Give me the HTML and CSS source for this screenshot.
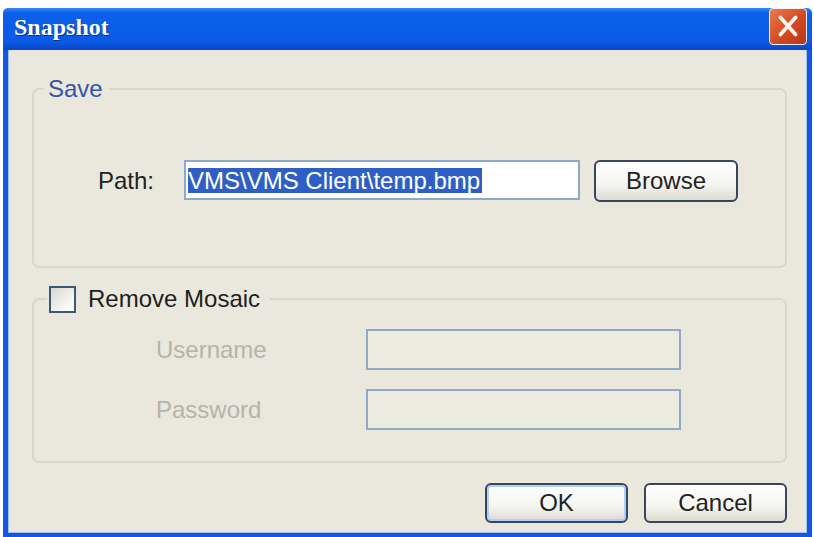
FILE: index.html
```html
<!DOCTYPE html>
<html lang="en">
  <head>
    <meta charset="UTF-8" />
    <title>Snapshot</title>
    <link rel="stylesheet" href="styles.css">
  </head>
  <body>
    <div class="window">
      <header class="titlebar">
        <span class="title">Snapshot</span>
        <button class="close" aria-label="Close">
          <svg width="38" height="37" viewBox="0 0 38 37">
            <path d="M11 9 L27 27 M27 9 L11 27" stroke="#fff4ea" stroke-width="4" stroke-linecap="round" fill="none" />
          </svg>
        </button>
      </header>
      <main class="client">
        <fieldset class="group save">
          <legend>Save</legend>
          <div class="path-row">
            <label class="label">Path:</label>
            <div class="field"><span class="sel">VMS\VMS Client\temp.bmp</span></div>
            <button class="btn browse">Browse</button>
          </div>
        </fieldset>

        <fieldset class="group mosaic">
          <legend><span class="check"></span>Remove Mosaic</legend>
          <div class="cred">
            <span class="dim">Username</span>
            <div class="field off"></div>
            <span class="dim">Password</span>
            <div class="field off"></div>
          </div>
        </fieldset>

        <div class="actions">
          <button class="btn default">OK</button>
          <button class="btn">Cancel</button>
        </div>
      </main>
    </div>
  </body>
</html>
```

FILE: styles.css
```css
body {
  margin: 0;
  background: #ffffff;
  font-family: "Liberation Sans", Arial, sans-serif;
}

.window {
  margin: 8px 2px 0 3px;
  height: 529px;
  display: flex;
  flex-direction: column;
}

.titlebar {
  height: 42px;
  flex: none;
  display: flex;
  align-items: flex-start;
  justify-content: space-between;
  background: linear-gradient(#3a86f6 0%, #0b60ea 12%, #0a5ae6 80%, #0846c4 100%);
  border-radius: 5px 5px 0 0;
}
.title {
  margin: 6px 0 0 11px;
  font-family: "Liberation Serif", "Times New Roman", serif;
  font-weight: bold;
  font-size: 24px;
  color: #ffffff;
  text-shadow: 1px 1px 0 #0b2f8a;
}
.close {
  width: 38px;
  height: 37px;
  margin-right: 5px;
  padding: 0;
  border: 1px solid #f2f2f2;
  border-radius: 4px;
  background: linear-gradient(135deg, #ea7a52, #d24a22 55%, #b8341a);
  display: flex;
  align-items: center;
  justify-content: center;
}

.client {
  flex: 1;
  background: #eae8dc;
  border: 5px solid #1457dc;
  border-top: 0;
  border-bottom-width: 4px;
  box-shadow: inset 1px 0 #9cc0f4, inset -1px 0 #9cc0f4, inset 0 -1px #9cc0f4;
  display: flex;
  flex-direction: column;
}

.group {
  margin: 0 20px 0 24px;
  padding: 0;
  border: 2px solid #d9d7c8;
  border-radius: 7px;
  box-sizing: border-box;
}
.group legend {
  margin-left: 10px;
  padding: 0 6px 0 4px;
  font-size: 24px;
  line-height: 28px;
}

.save {
  margin-top: 25px;
  height: 193px;
}
.save legend {
  color: #3354a8;
}
.path-row {
  display: flex;
  align-items: flex-start;
  margin-top: 57px;
  padding-left: 64px;
}
.label {
  width: 86px;
  margin-top: 7px;
  font-size: 24px;
  color: #222222;
}

.field {
  box-sizing: border-box;
  width: 396px;
  height: 40px;
  border: 2px solid #8da8c8;
  background: #ffffff;
  padding: 6px 0 0 2px;
}
.sel {
  display: inline-block;
  height: 25px;
  line-height: 25px;
  padding-right: 2px;
  background: #2f5fc4;
  color: #ffffff;
  font-size: 24px;
}

.btn {
  box-sizing: border-box;
  width: 143px;
  height: 40px;
  padding: 0;
  border: 2px solid #39445e;
  border-radius: 6px;
  background: linear-gradient(#ffffff, #f4f4f0 60%, #dedbd0);
  font-family: "Liberation Sans", Arial, sans-serif;
  font-size: 24px;
  color: #222222;
}
.browse {
  width: 144px;
  height: 42px;
  margin-left: 14px;
}
.default {
  box-shadow: inset 0 0 0 2px #b4cdf6;
}

.mosaic {
  margin-top: 17px;
  height: 178px;
}
.mosaic legend {
  display: flex;
  align-items: center;
  margin-left: 13px;
  padding: 0 10px 0 2px;
  color: #1e1e1e;
}
.check {
  box-sizing: border-box;
  width: 27px;
  height: 27px;
  margin-right: 12px;
  border: 2px solid #3d5777;
  background: linear-gradient(135deg, #d8d8d2, #f6f6f2 70%, #ffffff);
}

.cred {
  display: grid;
  grid-template-columns: 210px 315px;
  grid-template-rows: 41px 41px;
  row-gap: 19px;
  align-items: center;
  margin-top: 16px;
  padding-left: 122px;
}
.dim {
  font-size: 24px;
  color: #b6b4aa;
}
.off {
  width: 315px;
  height: 41px;
  background: #ecebe0;
  border-color: #90a9c6;
}

.actions {
  display: flex;
  justify-content: flex-end;
  gap: 16px;
  margin: 20px 20px 0 0;
}
```
